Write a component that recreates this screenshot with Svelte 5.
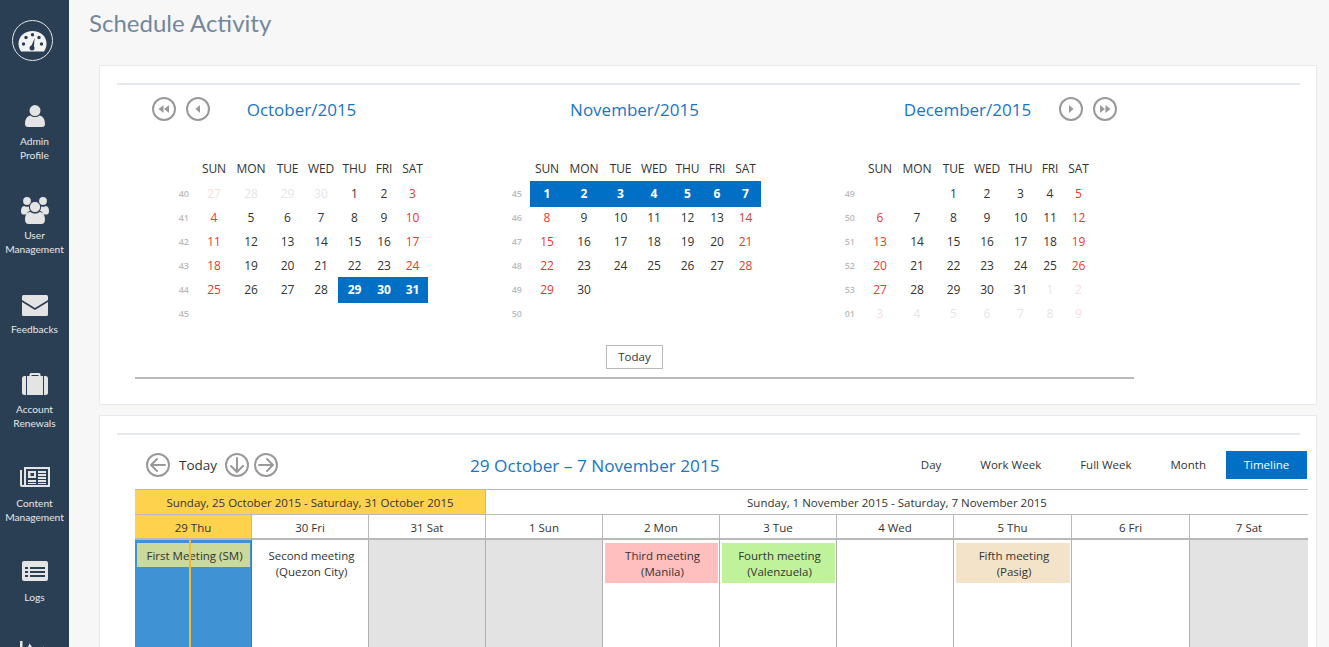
<script>
  const nav = [
    { icon: 'user', label: ['Admin', 'Profile'] },
    { icon: 'users', label: ['User', 'Management'] },
    { icon: 'mail', label: ['Feedbacks'] },
    { icon: 'case', label: ['Account', 'Renewals'] },
    { icon: 'news', label: ['Content', 'Management'] },
    { icon: 'logs', label: ['Logs'] },
    { icon: 'chart', label: [] }
  ];

  const heads = ['SUN', 'MON', 'TUE', 'WED', 'THU', 'FRI', 'SAT'];
  const span = (a, b, cls = '') => {
    const out = [];
    for (let i = a; i <= b; i++) out.push({ d: i, cls });
    return out;
  };
  const blanks = (n) => Array.from({ length: n }, () => ({ d: '', cls: '' }));
  const toRows = (cells) => {
    const rows = [];
    for (let i = 0; i < 42; i += 7) rows.push(cells.slice(i, i + 7));
    return rows;
  };

  const months = [
    {
      title: 'October/2015',
      side: 'left',
      weeks: ['40', '41', '42', '43', '44', '45'],
      rows: toRows([...span(27, 30, 'other'), ...span(1, 28), ...span(29, 31, 'sel'), ...blanks(7)])
    },
    {
      title: 'November/2015',
      side: '',
      weeks: ['45', '46', '47', '48', '49', '50'],
      rows: toRows([...span(1, 7, 'sel'), ...span(8, 30), ...blanks(12)])
    },
    {
      title: 'December/2015',
      side: 'right',
      weeks: ['49', '50', '51', '52', '53', '01'],
      rows: toRows([...blanks(2), ...span(1, 31), ...span(1, 9, 'other')])
    }
  ];

  const days = [
    { t: '29 Thu', cls: 'now', body: 'today', ev: { text: ['First Meeting (SM)'], color: '#cbd99a', cls: 'single' } },
    { t: '30 Fri', ev: { text: ['Second meeting', '(Quezon City)'], color: 'transparent' } },
    { t: '31 Sat', body: 'off' },
    { t: '1 Sun', body: 'off' },
    { t: '2 Mon', ev: { text: ['Third meeting', '(Manila)'], color: '#ffbfbf' } },
    { t: '3 Tue', ev: { text: ['Fourth meeting', '(Valenzuela)'], color: '#bff29a' } },
    { t: '4 Wed' },
    { t: '5 Thu', ev: { text: ['Fifth meeting', '(Pasig)'], color: '#f3e3c8' } },
    { t: '6 Fri' },
    { t: '7 Sat', body: 'off' }
  ];

  const views = ['Day', 'Work Week', 'Full Week', 'Month', 'Timeline'];
</script>

<div class="shell">
  <aside class="side">
    <div class="logo">
      <svg width="41" height="41" viewBox="0 0 41 41" aria-hidden="true">
        <circle cx="20.500" cy="20.500" r="20" fill="none" stroke="#e7e7e7" stroke-width="1" />
        <g transform="translate(.5 2.5)">
          <path d="M8.500 29 C6.500 26 6 23 6 21 C6 13.500 12.500 8.500 20 8.500 C27.500 8.500 34 13.500 34 21 C34 23 33.500 26 31.500 29 Z" fill="#f3f3f3" />
          <g fill="#2a3f54">
            <circle cx="11" cy="21.500" r="1.700" /><circle cx="13.500" cy="15" r="1.700" /><circle cx="20" cy="12.200" r="1.700" />
            <circle cx="26.500" cy="15" r="1.700" /><circle cx="29" cy="21.500" r="1.700" />
            <circle cx="19.500" cy="25.500" r="2.500" /><path d="M18.400 24.500 L22.200 15.500 L21.200 25.500 Z" />
          </g>
        </g>
      </svg>
    </div>
    {#each nav as item}
      <div class="item">
        <div class="ico">
          {#if item.icon === 'user'}
            <svg width="20" height="24" viewBox="0 -2 20 24" aria-hidden="true"><circle cx="10" cy="5.600" r="5.500" /><path d="M0 19 C0 13 3 11 5.500 10.500 C8 12.500 12 12.500 14.500 10.500 C17 11 20 13 20 19 C20 21 19 22 17 22 L3 22 C1 22 0 21 0 19 Z" /></svg>
          {:else if item.icon === 'users'}
            <svg width="28" height="29" viewBox="0 -2 28 29" aria-hidden="true"><circle cx="6" cy="4" r="3.900" /><circle cx="22" cy="4" r="3.900" /><path d="M0 14 C0 10.500 1.500 9 3.500 9 C5 10 6.500 10 8 9.500 C8 11 8.500 12.500 9.500 13.600 C7.500 14.200 6.200 15.600 5.600 17.500 L2 17.500 C.7 17.500 0 16 0 14 Z" /><path d="M28 14 C28 10.500 26.500 9 24.500 9 C23 10 21.500 10 20 9.500 C20 11 19.500 12.500 18.500 13.600 C20.500 14.200 21.800 15.600 22.400 17.500 L26 17.500 C27.300 17.500 28 16 28 14 Z" /><circle cx="14" cy="10" r="5.600" class="sep" /><path d="M4 22.500 C4 17.500 6.500 15 9.500 15 C12 17 16 17 18.500 15 C21.500 15 24 17.500 24 22.500 C24 25.500 22.500 27 20.500 27 L7.500 27 C5.500 27 4 25.500 4 22.500 Z" /></svg>
          {:else if item.icon === 'mail'}
            <svg width="26" height="25" viewBox="0 -4 26 25" aria-hidden="true"><path d="M1.500 0 H24.500 Q26 0 26 1.500 V5 L13 13 L0 5 V1.500 Q0 0 1.500 0 Z" /><path d="M0 7 L13 15 L26 7 V19.500 Q26 21 24.500 21 H1.500 Q0 21 0 19.500 Z" /></svg>
          {:else if item.icon === 'case'}
            <svg width="26" height="26" viewBox="0 -3 26 26" aria-hidden="true"><path d="M7.500 3 V1.500 Q7.500 0 9 0 H17 Q18.500 0 18.500 1.500 V3 H16.500 V2 H9.500 V3 Z" /><rect x="5" y="3" width="16" height="19" /><path d="M0 5.500 Q0 3 2.500 3 H4 V22 H2.500 Q0 22 0 19.500 Z" /><path d="M26 5.500 Q26 3 23.500 3 H22 V22 H23.500 Q26 22 26 19.500 Z" /></svg>
          {:else if item.icon === 'news'}
            <svg width="30" height="20" viewBox="0 0 30 20" aria-hidden="true"><path fill-rule="evenodd" d="M4 0 H30 V20 H2 Q0 20 0 18 V3 H2 V17.500 Q2 18 3 18 Q4 18 4 17.500 Z M6 2 V18 H28 V2 Z" /><path fill-rule="evenodd" d="M8 4 H16 V11 H8 Z M10.500 6 V9 H14 V6 Z" /><rect x="18" y="4" width="8" height="2" /><rect x="18" y="7" width="8" height="2" /><rect x="18" y="10" width="8" height="2" /><rect x="8" y="13" width="8" height="2" /><rect x="18" y="13" width="8" height="2" /><rect x="8" y="16" width="8" height="1" /><rect x="18" y="16" width="8" height="1" /></svg>
          {:else if item.icon === 'logs'}
            <svg width="26" height="20" viewBox="0 0 26 20" aria-hidden="true"><path fill-rule="evenodd" d="M2 0 H24 Q26 0 26 2 V18 Q26 20 24 20 H2 Q0 20 0 18 V2 Q0 0 2 0 Z M3 6 V8 H6 V6 Z M8 6 V8 H23 V6 Z M3 10 V12 H6 V10 Z M8 10 V12 H23 V10 Z M3 14 V16 H6 V14 Z M8 14 V16 H23 V14 Z" /></svg>
          {:else}
            <svg width="30" height="20" viewBox="0 0 30 20" aria-hidden="true"><rect x="0" y="0" width="2.500" height="20" /><path d="M4 16 L9.500 2.500 L15 10 L23.500 5.500 L29 12 V20 H4 Z" /></svg>
          {/if}
        </div>
        <div class="lab">{#each item.label as l}<div>{l}</div>{/each}</div>
      </div>
    {/each}
  </aside>

  <main class="main">
    <h1>Schedule Activity</h1>

    <section class="panel first">
      <div class="rule"></div>
      <div class="cals">
        {#each months as m}
          <div class="month">
            <div class="mhead">
              <div class="navs lft">
                {#if m.side === 'left'}
                  <span class="cb"><svg viewBox="0 0 24 24" width="24" height="24" aria-hidden="true"><circle cx="12" cy="12" r="11" /><path class="f" d="M11.500 8 V16 L6.500 12 Z M17 8 V16 L12 12 Z" /></svg></span>
                  <span class="cb"><svg viewBox="0 0 24 24" width="24" height="24" aria-hidden="true"><circle cx="12" cy="12" r="11" /><path class="f" d="M14 8 V16 L9.500 12 Z" /></svg></span>
                {/if}
              </div>
              <div class="mtitle">{m.title}</div>
              <div class="navs rgt">
                {#if m.side === 'right'}
                  <span class="cb"><svg viewBox="0 0 24 24" width="24" height="24" aria-hidden="true"><circle cx="12" cy="12" r="11" /><path class="f" d="M10 8 V16 L14.500 12 Z" /></svg></span>
                  <span class="cb"><svg viewBox="0 0 24 24" width="24" height="24" aria-hidden="true"><circle cx="12" cy="12" r="11" /><path class="f" d="M7 8 V16 L12 12 Z M12.500 8 V16 L17.500 12 Z" /></svg></span>
                {/if}
              </div>
            </div>
            <div class="grid hdr">
              <span></span>
              {#each heads as h}<span>{h}</span>{/each}
            </div>
            {#each m.rows as row, r}
              <div class="grid">
                <span class="wk">{m.weeks[r]}</span>
                {#each row as c, i}
                  <span class="day {c.cls}" class:we={i === 0 || i === 6}>{c.d}</span>
                {/each}
              </div>
            {/each}
          </div>
        {/each}
      </div>
      <div class="todaywrap"><span class="todaybtn">Today</span></div>
      <div class="hr"></div>
    </section>

    <section class="panel second">
      <div class="rule"></div>
      <div class="sched">
        <div class="toolbar">
          <div class="tleft">
            <svg class="arrow" viewBox="0 0 24 24" width="24" height="24" aria-hidden="true"><circle cx="12" cy="12" r="11" /><path d="M19 12 H5 M11 6 L5 12 L11 18" /></svg>
            <span class="ttoday">Today</span>
            <svg class="arrow" viewBox="0 0 24 24" width="24" height="24" aria-hidden="true"><circle cx="12" cy="12" r="11" /><path d="M12 5 V19 M6 13 L12 19 L18 13" /></svg>
            <svg class="arrow" viewBox="0 0 24 24" width="24" height="24" aria-hidden="true"><circle cx="12" cy="12" r="11" /><path d="M5 12 H19 M13 6 L19 12 L13 18" /></svg>
          </div>
          <div class="range">29 October – 7 November 2015</div>
          <div class="views">
            {#each views as v}
              <span class="view" class:active={v === 'Timeline'}>{v}</span>
            {/each}
          </div>
        </div>

        <div class="table">
          <div class="wk-a">Sunday, 25 October 2015 - Saturday, 31 October 2015</div>
          <div class="wk-b">Sunday, 1 November 2015 - Saturday, 7 November 2015</div>
          {#each days as d}
            <div class="dh {d.cls ?? ''}">{d.t}</div>
          {/each}
          {#each days as d}
            <div class="cell {d.body ?? ''}">
              {#if d.ev}
                <div class="ev {d.ev.cls ?? ''}" style="background:{d.ev.color}">
                  {#each d.ev.text as line}<div>{line}</div>{/each}
                </div>
              {/if}
              {#if d.body === 'today'}<div class="nowline"></div>{/if}
            </div>
          {/each}
        </div>
      </div>
    </section>
  </main>
</div>

<style>
  :global(body) {
    margin: 0;
    overflow: hidden;
    background: #f7f7f7;
  }
  .shell {
    display: flex;
    height: 647px;
    overflow: hidden;
    background: #f7f7f7;
  }
  .side {
    width: 69px;
    flex: none;
    background: #2a3f54;
    font-family: Lato, sans-serif;
    color: #e7e7e7;
  }
  .logo {
    height: 100px;
    box-sizing: border-box;
    padding: 20px 4px 0 0;
    display: flex;
    justify-content: center;
  }
  .item {
    padding-bottom: 32px;
    text-align: center;
  }
  .ico {
    height: 30px;
    display: flex;
    align-items: center;
    justify-content: center;
    margin-bottom: 4px;
  }
  .ico svg {
    fill: #e4e4e4;
  }
  .ico .sep {
    stroke: #2a3f54;
    stroke-width: 1;
  }
  .lab {
    font-size: 10.2px;
    line-height: 14px;
    white-space: nowrap;
  }
  .main {
    flex: 1;
    min-width: 0;
    padding: 0 12px 0 20px;
  }
  h1 {
    margin: 0;
    height: 47px;
    box-sizing: border-box;
    padding-top: 7px;
    font: 400 24px/32px Lato, sans-serif;
    color: #73879c;
  }
  .panel {
    margin: 0 0 10px 10px;
    box-sizing: border-box;
    background: #fff;
    border: 1px solid #e6e9ed;
    padding: 17px 16px 0 17px;
    font-family: "Open Sans", sans-serif;
    color: #333;
  }
  .first {
    margin-top: 18px;
    height: 340px;
  }
  .second {
    height: 300px;
    margin-bottom: 0;
  }
  .rule {
    height: 2px;
    background: #e6e9ed;
  }
  .cals {
    display: flex;
    margin-left: 18px;
    margin-top: 12px;
    width: 999px;
  }
  .month {
    width: 333px;
  }
  .mhead {
    display: grid;
    grid-template-columns: 1fr auto 1fr;
    align-items: center;
    height: 24px;
    margin-bottom: 36px;
  }
  .mtitle {
    font-size: 17px;
    color: #1a75c4;
    white-space: nowrap;
  }
  .navs {
    display: flex;
    gap: 10px;
  }
  .lft {
    padding-left: 17px;
  }
  .rgt {
    padding-left: 28px;
  }
  .cb {
    display: block;
    width: 24px;
    height: 24px;
  }
  .cb svg, .arrow {
    display: block;
    fill: none;
    stroke: #999;
    stroke-width: 2;
  }
  .cb .f {
    fill: #999;
    stroke: none;
  }
  .grid {
    display: grid;
    grid-template-columns: 62px 34px 40px 33px 34px 33px 26px 31px;
    height: 24px;
    line-height: 26px;
    text-align: center;
    font-size: 12px;
  }
  .hdr {
    line-height: 24px;
  }
  .hdr span {
    letter-spacing: -0.1px;
  }
  .wk {
    text-align: right;
    padding-right: 8px;
    font-size: 9px;
    font-weight: 600;
    color: #bbb;
  }
  .day.we {
    color: #e8392f;
  }
  .day.other {
    color: #e6e6e6;
  }
  .day.other.we {
    color: #f8dede;
  }
  .day.sel {
    background: #0070c6;
    color: #fff;
    font-weight: 700;
  }
  .todaywrap {
    display: flex;
    justify-content: center;
    width: 999px;
    margin: 20px 0 0 18px;
  }
  .todaybtn {
    width: 57px;
    height: 24px;
    box-sizing: border-box;
    border: 1px solid #b9b9b9;
    text-align: center;
    font-size: 11.500px;
    line-height: 22px;
  }
  .hr {
    width: 999px;
    height: 2px;
    margin: 8px 0 0 18px;
    background: #b9b9b9;
  }
  .sched {
    margin: 16px 0 0 18px;
    width: 1173px;
  }
  .toolbar {
    display: grid;
    grid-template-columns: 335px auto 1fr;
    align-items: center;
    height: 28px;
    margin-bottom: 10px;
  }
  .tleft {
    display: flex;
    align-items: center;
    padding-left: 11px;
  }
  .ttoday {
    font-size: 13.500px;
    width: 55px;
    padding-left: 9px;
    box-sizing: border-box;
  }
  .tleft .arrow:last-child {
    margin-left: 5px;
  }
  .arrow path {
    stroke-linecap: round;
  }
  .range {
    font-size: 17.200px;
    color: #1a75c4;
    white-space: nowrap;
  }
  .views {
    display: flex;
    justify-content: flex-end;
    padding-right: 1px;
  }
  .view {
    font-size: 11.500px;
    height: 28px;
    line-height: 28px;
    padding: 0 20px 0 19px;
  }
  .view.active {
    width: 81px;
    padding: 0;
    box-sizing: border-box;
    text-align: center;
    background: #0070c6;
    color: #fff;
  }
  .table {
    display: grid;
    grid-template-columns: repeat(7, 117px) repeat(3, 118px);
    grid-template-rows: 25px 25px 107px;
    border-top: 1px solid #b9b9b9;
    font-size: 11.500px;
    line-height: 24px;
    text-align: center;
  }
  .wk-a, .wk-b, .dh {
    border-bottom: 1px solid #b9b9b9;
    height: 25px;
    box-sizing: border-box;
    padding-top: 1px;
  }
  .wk-a {
    grid-column: span 3;
    background: #ffd24d;
    border-right: 1px solid #b9b9b9;
  }
  .wk-b {
    grid-column: span 7;
  }
  .dh {
    border-right: 1px solid #b9b9b9;
    border-bottom-width: 2px;
  }
  .dh:nth-child(12) {
    border-right: 0;
  }
  .dh.now {
    background: #ffd24d;
  }
  .cell {
    position: relative;
    border-right: 1px solid #b0b0b0;
    padding: 3px 1px 0 2px;
    border-top: 1px solid #b9b9b9;
    margin-top: -1px;
    line-height: 16px;
  }
  .cell:last-child {
    border-right: 0;
  }
  .cell.off {
    background: #e3e3e3;
  }
  .cell.today {
    background: #3f93d4;
    border-right-color: #2f7fc0;
  }
  .ev {
    padding: 5px 0 3px 2px;
    color: #333;
  }
  .ev.single {
    height: 24px;
    box-sizing: border-box;
    padding-top: 5px;
  }
  .nowline {
    position: absolute;
    top: -1px;
    left: 54px;
    width: 2px;
    height: 108px;
    background: #f5b82e;
  }
</style>
